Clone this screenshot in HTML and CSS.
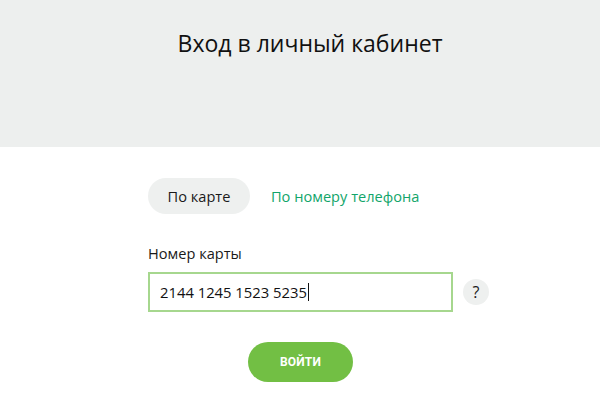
FILE: index.html
```html
<!DOCTYPE html>
<html lang="ru">
<head>
<meta charset="utf-8">
<link rel="stylesheet" href="styles.css">
</head>
<body>
<header class="top">
  <h1 class="title">Вход в личный кабинет</h1>
</header>
<main class="form">
  <div class="tabs">
    <span class="tab tab-active">По карте</span>
    <span class="tab tab-link">По номеру телефона</span>
  </div>
  <label class="label">Номер карты</label>
  <div class="field-row">
    <div class="input"><span class="value">2144 1245 1523 5235</span><span class="caret"></span></div>
    <span class="help">?</span>
  </div>
  <div class="actions">
    <button class="submit">ВОЙТИ</button>
  </div>
</main>
</body>
</html>
```
FILE: styles.css
```css
html, body {
  margin: 0;
  padding: 0;
  background: #ffffff;
  font-family: "Open Sans", "Noto Sans", sans-serif;
  color: #1a1a1a;
}
.top {
  height: 147px;
  background: #edefee;
  display: flex;
  justify-content: center;
  padding-top: 28px;
  box-sizing: border-box;
}
.title {
  margin: 0;
  font-size: 23px;
  font-weight: 400;
  line-height: 30px;
  color: #111;
  padding-left: 20px;
}
.form {
  width: 305px;
  margin-left: 148px;
  padding-top: 31px;
}
.tabs {
  display: flex;
  align-items: center;
  gap: 21px;
}
.tab {
  font-size: 14.6px;
  line-height: 36px;
}
.tab-active {
  background: #eef0ef;
  border-radius: 18px;
  width: 102px;
  text-align: center;
  color: #1a1a1a;
}
.tab-link {
  color: #12a56a;
}
.label {
  display: block;
  margin-top: 29px;
  font-size: 14.6px;
  line-height: 20px;
}
.field-row {
  display: flex;
  align-items: center;
  margin-top: 9px;
  width: 342px;
  gap: 10px;
}
.input {
  width: 305px;
  height: 40px;
  box-sizing: border-box;
  border: 2px solid #a6d78e;
  display: flex;
  align-items: center;
  padding-left: 10px;
  font-size: 14.8px;
  color: #111;
}
.caret {
  display: inline-block;
  width: 1px;
  height: 18px;
  background: #111;
  margin-left: 1px;
}
.help {
  width: 26px;
  height: 26px;
  border-radius: 50%;
  background: #eef0ef;
  display: flex;
  align-items: center;
  justify-content: center;
  font-size: 16px;
  color: #1a1a1a;
}
.actions {
  display: flex;
  justify-content: center;
  margin-top: 30px;
}
.submit {
  width: 105px;
  height: 40px;
  border: none;
  border-radius: 20px;
  background: #72bf44;
  color: #fff;
  font-family: Roboto, "Open Sans", sans-serif;
  font-weight: 700;
  font-size: 12px;
  letter-spacing: 0.2px;
  padding: 0;
}
```
